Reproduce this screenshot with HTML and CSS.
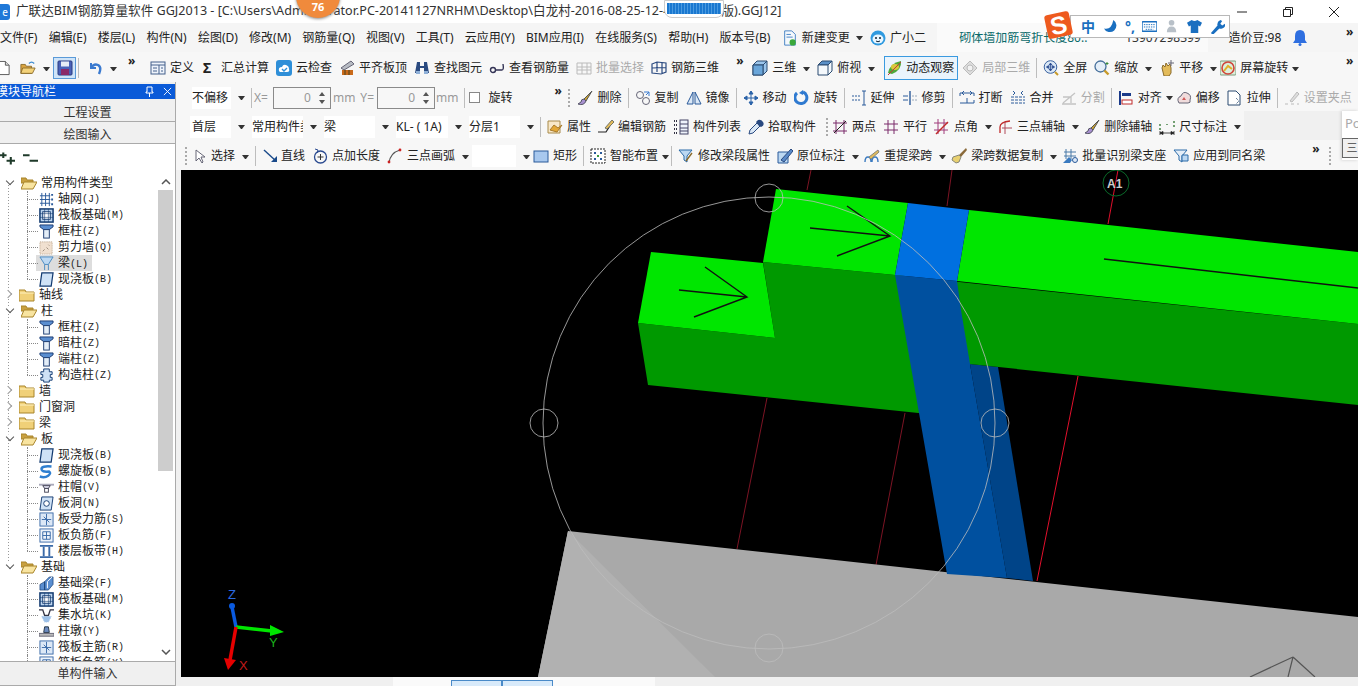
FILE: index.html
```html
<!DOCTYPE html>
<html lang="zh-CN">
<head>
<meta charset="utf-8">
<title>广联达BIM钢筋算量软件 GGJ2013</title>
<link rel="stylesheet" href="styles.css">
</head>
<body>
<svg class="sprite" xmlns="http://www.w3.org/2000/svg">
<defs>
<symbol id="new" viewBox="0 0 16 16"><path d="M2 1h8l4 4v10H2z" fill="#fff" stroke="#555"/><path d="M10 1v4h4" fill="#ddd" stroke="#555"/></symbol>
<symbol id="open" viewBox="0 0 18 16"><path d="M1 4h5l1 2h6v8H1z" fill="#d9a441" stroke="#8a6a2a"/><path d="M3 8h14l-3 6H1z" fill="#f3d27a" stroke="#8a6a2a"/><path d="M10 3q3-3 6 0" fill="none" stroke="#3a8ad0" stroke-width="1.4"/></symbol>
<symbol id="save" viewBox="0 0 16 16"><rect x="1" y="1" width="14" height="14" rx="1" fill="#4a62b8" stroke="#2a3a80"/><rect x="4" y="1.5" width="8" height="5" fill="#e8edf6"/><rect x="4" y="9" width="8" height="6" fill="#8a2a6a"/></symbol>
<symbol id="undo" viewBox="0 0 16 16"><path d="M4 3v5h5" fill="none" stroke="#3a7ad0" stroke-width="2"/><path d="M4 8q3-5 7-3t1 9" fill="none" stroke="#3a7ad0" stroke-width="2.4"/></symbol>
<symbol id="def" viewBox="0 0 16 16"><rect x="1" y="2" width="14" height="12" fill="#eef3fb" stroke="#44608c"/><path d="M1 5h14M9 5v9M3 8h4M3 11h4M11 8h2M11 11h2" stroke="#44608c" fill="none"/></symbol>
<symbol id="cloud" viewBox="0 0 16 16"><rect x="0" y="0" width="16" height="16" rx="3" fill="#2f8fd8"/><path d="M3 11q-1-4 3-4 1-3 4-2t3 4q1 3-2 3H4z" fill="#fff"/><path d="M6 9l2 2 3-3" fill="none" stroke="#2f8fd8" stroke-width="1.4"/></symbol>
<symbol id="aligntop" viewBox="0 0 16 16"><path d="M2 8L12 1l3 3L5 10z" fill="#b8bcc4" stroke="#667"/><rect x="3" y="10" width="11" height="5" fill="#c96a1a"/><path d="M6 10v5M10 10v5" stroke="#442" /></symbol>
<symbol id="binoc" viewBox="0 0 16 16"><path d="M3 2h3v4h4V2h3l2 11H10V8H6v5H1z" fill="#2a4a80"/><rect x="2" y="11" width="4" height="3" fill="#8fb0d8"/><rect x="10" y="11" width="4" height="3" fill="#8fb0d8"/></symbol>
<symbol id="lookrebar" viewBox="0 0 16 16"><circle cx="4" cy="10" r="2.5" fill="none" stroke="#335" stroke-width="1.4"/><path d="M7 10h6q2 0 1-6" fill="none" stroke="#335" stroke-width="1.4"/></symbol>
<symbol id="batch" viewBox="0 0 16 16"><path d="M1 3h14v11H1zM1 7h14M1 10h14M6 3v11M11 3v11" fill="none" stroke="#bbb"/></symbol>
<symbol id="rebar3d" viewBox="0 0 16 16"><path d="M1 4l5-2 9 1v9l-5 2-9-1zM6 2v10M11 3v11M1 8l14-.5" fill="none" stroke="#2a4a80" stroke-width="1.2"/></symbol>
<symbol id="cube" viewBox="0 0 16 16"><path d="M5 1h10v10l-4 4H1V5z" fill="#9cc6ec" stroke="#2a4a70"/><path d="M1 5h10v10M11 5l4-4" fill="none" stroke="#2a4a70"/><path d="M1 5h10v10H1z" fill="#6aa6da" stroke="#2a4a70"/></symbol>
<symbol id="cubetop" viewBox="0 0 16 16"><path d="M1 5l4-4h10l-4 4z" fill="#5a90c8" stroke="#2a4a70"/><path d="M1 5h10v10H1zM11 5l4-4v10l-4 4" fill="#f4f8fc" stroke="#2a4a70"/></symbol>
<symbol id="orbit" viewBox="0 0 16 16"><path d="M1 13Q3 3 14 1q1 9-9 13z" fill="#4fa83a"/><ellipse cx="8" cy="7" rx="4" ry="3" fill="#d8c83a"/><path d="M1 15L14 2" stroke="#c23a3a"/></symbol>
<symbol id="local3d" viewBox="0 0 16 16"><path d="M8 1l7 7-7 7-7-7z" fill="#ddd" stroke="#bbb"/><circle cx="8" cy="8" r="3" fill="#f2f2f2" stroke="#bbb"/></symbol>
<symbol id="full" viewBox="0 0 16 16"><circle cx="7.5" cy="7" r="6.3" fill="#dbe8f6" stroke="#3a62a0"/><path d="M7.5 3v8M3.5 7h8M7.5 3l-1.5 2h3zM7.5 11l-1.5-2h3zM3.5 7l2-1.5v3zM11.5 7l-2-1.5v3z" fill="#2a4a90" stroke="#2a4a90" stroke-width=".7"/><path d="M12 12l3 3" stroke="#c89a2a" stroke-width="2"/></symbol>
<symbol id="zoom" viewBox="0 0 16 16"><circle cx="6.5" cy="6.5" r="5.5" fill="#e4eef8" stroke="#47709c" stroke-width="1.3"/><path d="M10.5 10.5l4 4" stroke="#c89a2a" stroke-width="2.4"/><path d="M13 2v3M11.5 3.5h3" stroke="#3a8a3a"/></symbol>
<symbol id="pan" viewBox="0 0 16 16"><path d="M3 8l1-3 2 2 1-4 2 3 2-2 1 4v5l-2 3H5z" fill="#e3bb5a" stroke="#8a6a2a"/><path d="M12 0v6M9 3h6" stroke="#667"/></symbol>
<symbol id="screenrot" viewBox="0 0 16 16"><rect x="0" y="1" width="16" height="14" rx="1" fill="#dcefdc" stroke="#7a9a7a"/><circle cx="8" cy="8" r="6" fill="none" stroke="#d0433a" stroke-width="1.6"/><path d="M4 11l4-5 4 3" fill="none" stroke="#e0b02a" stroke-width="2"/></symbol>
<symbol id="brush" viewBox="0 0 16 16"><path d="M15 1L7 9l2 2z" fill="#c8a030" stroke="#555"/><path d="M7 9q-3 0-3 3l-3 2q6 2 8-3z" fill="#a890d0" stroke="#556"/></symbol>
<symbol id="copy" viewBox="0 0 16 16"><circle cx="5" cy="5" r="3.5" fill="none" stroke="#667"/><circle cx="11" cy="11" r="3.5" fill="none" stroke="#667"/><path d="M9 2h5v4M14 2l-3 3" fill="none" stroke="#3a7ad0"/></symbol>
<symbol id="mirror" viewBox="0 0 16 16"><path d="M7 2v12H1zM9 2v12h6z" fill="#dbe8f6" stroke="#2a5a9a"/></symbol>
<symbol id="move" viewBox="0 0 16 16"><path d="M8 1v14M1 8h14M8 1L6 4h4zM8 15l-2-3h4zM1 8l3-2v4zM15 8l-3-2v4z" fill="#2a62a8" stroke="#2a62a8"/></symbol>
<symbol id="rot" viewBox="0 0 16 16"><path d="M3 3a6 6 0 1 0 6-1" fill="none" stroke="#2f7ad0" stroke-width="3"/><path d="M9 0v5l-4-2z" fill="#2f7ad0"/></symbol>
<symbol id="extend" viewBox="0 0 16 16"><path d="M1 6h8M1 10h8" stroke="#2a5a9a" stroke-dasharray="2 1"/><path d="M13 1v14M11 1h4M11 15h4" stroke="#2a5a9a" fill="none"/></symbol>
<symbol id="trim" viewBox="0 0 16 16"><path d="M8 1v14" stroke="#2a5a9a" stroke-width="1.4"/><path d="M1 6h5M1 10h5" stroke="#2a5a9a"/><path d="M10 6h5M10 10h5" stroke="#9ab" stroke-dasharray="2 1"/></symbol>
<symbol id="break" viewBox="0 0 16 16"><path d="M1 6V3h14v3M1 13h14v-3" fill="none" stroke="#2a5a9a"/><path d="M5 1l-2 2 2 2M11 1l2 2-2 2M8 8v5" fill="none" stroke="#2a5a9a"/></symbol>
<symbol id="merge" viewBox="0 0 16 16"><path d="M1 7h14M1 13h14M1 10h14" stroke="#2a5a9a" stroke-dasharray="3 1"/><path d="M3 1l2 2-2 2M13 1l-2 2 2 2" fill="none" stroke="#2a5a9a"/></symbol>
<symbol id="split" viewBox="0 0 16 16"><path d="M1 14h14M2 13L14 3M2 7h8v6" fill="none" stroke="#c4c4c4" stroke-width="1.3"/></symbol>
<symbol id="align" viewBox="0 0 16 16"><path d="M2 1v14" stroke="#1a3a8a" stroke-width="2"/><rect x="4" y="3" width="9" height="3" fill="#1a3a8a"/><rect x="4" y="10" width="10" height="4" fill="#fff" stroke="#c02a2a"/></symbol>
<symbol id="offset" viewBox="0 0 16 16"><path d="M3 13q-3-5 2-7 2-5 6-3 5 2 3 7 1 3-2 3z" fill="#f0dcdc" stroke="#667"/><path d="M6 10l2-3 2 3z" fill="#d05a5a"/></symbol>
<symbol id="stretch" viewBox="0 0 16 16"><path d="M1 1h8l4 4v10H1z" fill="#fff" stroke="#2a4a70"/><path d="M9 8l3 3-3 3" fill="none" stroke="#2a4a70" stroke-dasharray="1 1"/></symbol>
<symbol id="grip" viewBox="0 0 16 16"><path d="M1 14h3M7 14h3M13 14h2" stroke="#bbb"/><path d="M6 11l7-9 2 2-7 8z" fill="#ddd" stroke="#bbb"/></symbol>
<symbol id="attr" viewBox="0 0 16 16"><path d="M1 2h12v12H1z" fill="#f8e8c8" stroke="#a88a4a"/><path d="M3 11l4-5 4 3 4-3-5 7z" fill="#e3a838" stroke="#a87a2a"/></symbol>
<symbol id="edit" viewBox="0 0 16 16"><path d="M0 13h8l7-11" fill="none" stroke="#222" stroke-width="1.2"/><path d="M7 9l7-8 2 2-7 7z" fill="#e3bb5a" stroke="#776"/></symbol>
<symbol id="list" viewBox="0 0 16 16"><path d="M1 2h3M1 6h3M1 10h3M1 14h3" stroke="#334" stroke-width="2" stroke-dasharray="1 1"/><rect x="7" y="1" width="8" height="14" fill="#eef3fb" stroke="#446"/><path d="M7 5h8M7 9h8M7 12h8" stroke="#446"/></symbol>
<symbol id="pick" viewBox="0 0 16 16"><path d="M1 15l1-4 7-7 3 3-7 7z" fill="#dbe8f6" stroke="#2a4a80"/><path d="M8 3l2-2q3-1 5 2t-2 5l-2-1z" fill="#2a4a80"/></symbol>
<symbol id="twopt" viewBox="0 0 16 16"><path d="M1 4h14M1 12h14M4 1v14M12 1v14" stroke="#7a2a6a" fill="none"/><path d="M2 14L14 2" stroke="#222"/></symbol>
<symbol id="parallel" viewBox="0 0 16 16"><path d="M1 5h14M1 11h14M5 1v14M11 1v14" stroke="#7a2a6a" fill="none"/></symbol>
<symbol id="angle" viewBox="0 0 16 16"><path d="M0 4h14M0 11h14M4 0v15M10 0v15" stroke="#a03a7a" fill="none"/><path d="M2 15L14 3" stroke="#c02a2a" stroke-width="1.4"/></symbol>
<symbol id="threept" viewBox="0 0 16 16"><path d="M3 14V8q0-5 10-6" fill="none" stroke="#c02a2a" stroke-width="1.3"/><path d="M8 3v12M5 9h10" stroke="#b04a5a"/></symbol>
<symbol id="dim" viewBox="0 0 16 16"><path d="M1 14h14M1 12v4M15 12v4M1 14l3-1.500v3zM15 14l-3-1.500v3z" fill="#222" stroke="#222" stroke-width=".8"/><path d="M1 5v2M1 9v2M8 5v1M15 2v2M15 6v2" stroke="#3a7a3a" stroke-width="1.400"/></symbol>
<symbol id="line" viewBox="0 0 16 16"><path d="M1 2l12 11" stroke="#1a4a8a" stroke-width="1.4"/><path d="M14 14V8l-6 6z" fill="#1a4a8a"/></symbol>
<symbol id="ptlen" viewBox="0 0 16 16"><circle cx="8.500" cy="9" r="6" fill="none" stroke="#2a4a90" stroke-width="1.3"/><path d="M8.500 6v6M5.500 9h6" stroke="#333"/><path d="M3 1l3 1-1 3" fill="none" stroke="#2a4a90"/></symbol>
<symbol id="arc" viewBox="0 0 16 16"><path d="M2 15Q3 5 13 2" fill="none" stroke="#555" stroke-width="1.3"/><circle cx="2" cy="14" r="1.400" fill="#c22"/><circle cx="13" cy="2" r="1.400" fill="#c22"/></symbol>
<symbol id="rect" viewBox="0 0 16 16"><rect x="1" y="3" width="14" height="11" fill="#a8c8ee" stroke="#2a5a9a"/></symbol>
<symbol id="smart" viewBox="0 0 16 16"><rect x="1" y="1" width="14" height="14" fill="#fff" stroke="#222" stroke-dasharray="2 1"/><path d="M4 4h2v2H4zM10 4h2v2h-2zM4 10h2v2H4zM10 10h2v2h-2z" fill="#2a5a9a"/><path d="M7 7h2v2H7z" fill="#3a9a3a"/></symbol>
<symbol id="modseg" viewBox="0 0 16 16"><path d="M1 2h13L9 8v6L6 12V8z" fill="#bcd8f2" stroke="#2a6aa8"/><path d="M8 13l6-8" stroke="#8a6a2a" stroke-width="1.400"/></symbol>
<symbol id="inplace" viewBox="0 0 16 16"><path d="M1 4h10v11H1z" fill="#bcd8f2" stroke="#2a5a9a"/><path d="M4 12L14 1l2 2-9 11z" fill="#5a8ac8" stroke="#2a4a80"/></symbol>
<symbol id="relift" viewBox="0 0 16 16"><path d="M1 14q0-5 3-5t3 5M8 14q0-5 3-5t3 5" fill="none" stroke="#3a7ac0" stroke-width="1.400"/><path d="M5 9l9-7 1 2-8 7z" fill="#e3bb5a" stroke="#887"/></symbol>
<symbol id="copydata" viewBox="0 0 16 16"><path d="M15 0L8 7l2 2 6-7z" fill="#8a6a3a"/><path d="M8 7L2 9l-1 3 4 3 3-1 2-5z" fill="#e8d070" stroke="#887"/></symbol>
<symbol id="batchid" viewBox="0 0 16 16"><path d="M2 4h12M2 8h12M4 1v10M9 1v10" stroke="#4a7aa8" fill="none"/><path d="M1 15l6-6 3 3-2 3z" fill="#3a7ac0"/><circle cx="13" cy="12" r="2.500" fill="#dbe8f6" stroke="#2a5a9a"/></symbol>
<symbol id="apply" viewBox="0 0 16 16"><path d="M1 2h13L9 8v6L6 12V8z" fill="#e4eef8" stroke="#2a6aa8"/><path d="M9 7h6v6H9z" fill="#bcd8f2" stroke="#2a6aa8"/></symbol>
<symbol id="cursor" viewBox="0 0 10 14"><path d="M1 1v11l3-3 3 5 1-1-2-5h4z" fill="#fff" stroke="#667"/></symbol>
<symbol id="docnew" viewBox="0 0 16 18"><path d="M2 1h8l4 4v12H2z" fill="#f4f8fc" stroke="#3a7ac0"/><path d="M4 5h5M4 8h7" stroke="#3a7ac0"/><circle cx="11" cy="14" r="3.500" fill="#3aa83a"/></symbol>
<symbol id="xiao" viewBox="0 0 16 16"><circle cx="8" cy="8" r="7.500" fill="#2f9ae0"/><ellipse cx="8" cy="9" rx="5.500" ry="4.500" fill="#e8f6ff"/><circle cx="6" cy="8" r="1" fill="#123"/><circle cx="10" cy="8" r="1" fill="#123"/><path d="M6 11q2 1.500 4 0" stroke="#123" fill="none"/></symbol>
<symbol id="bell" viewBox="0 0 14 16"><path d="M7 0q5 0 5 6v4l2 3H0l2-3V6q0-6 5-6z" fill="#2f6fe0"/><circle cx="7" cy="14.500" r="1.500" fill="#2f6fe0"/></symbol>
<symbol id="fold" viewBox="0 0 16 14"><path d="M0 2h6l1 2h8v9H0z" fill="#f0d078" stroke="#a8842a"/><path d="M1 5h14" stroke="#fff2c0"/></symbol>
<symbol id="foldo" viewBox="0 0 16 14"><path d="M0 2h5l1 2h6v3H0z" fill="#c8a040" stroke="#a8842a"/><path d="M3 6h13l-4 7H0z" fill="#f8e4a0" stroke="#a8842a"/></symbol>
<symbol id="t-grid" viewBox="0 0 16 16"><path d="M3 1v14M7 1v14M11 1v14M1 4h11M1 8h11M1 12h11" stroke="#2a5a9a" fill="none"/><path d="M14 2v2M14 7v2M14 12v2" stroke="#2a5a9a" stroke-width="2"/></symbol>
<symbol id="t-raft" viewBox="0 0 16 16"><rect x="1" y="1" width="14" height="14" fill="#bcd4ee" stroke="#123a70" stroke-width="1.600"/><rect x="4" y="4" width="8" height="8" fill="#fff" stroke="#123a70"/><path d="M1 6h14M1 10h14M6 1v14M10 1v14" stroke="#123a70" stroke-width=".6"/></symbol>
<symbol id="t-col" viewBox="0 0 16 16"><path d="M1 1h14v2l-4 3H5L1 3z" fill="#5a8ed0" stroke="#1a3a70"/><rect x="5" y="6" width="6" height="9" fill="#e4eef8" stroke="#1a3a70"/></symbol>
<symbol id="t-wall" viewBox="0 0 16 16"><rect x="1" y="2" width="13" height="13" fill="#f0e0d0" stroke="#b8a088" stroke-dasharray="1 1"/><path d="M4 12l2-2M8 8l2 2M10 5l1 1" stroke="#9a8a7a"/></symbol>
<symbol id="t-beam" viewBox="0 0 16 16"><path d="M1 1h14L10 9H6z" fill="#bcd8f2" stroke="#4a8ac0"/><path d="M6 9v6M10 9v6" stroke="#4a8ac0"/></symbol>
<symbol id="t-slab" viewBox="0 0 16 16"><path d="M3 1h12l-2 14H1z" fill="#cfe2f6" stroke="#123a70" stroke-width="1.300"/></symbol>
<symbol id="t-cons" viewBox="0 0 16 16"><path d="M5 1h6v3h3v3h-2v3h2v3h-3v2H5v-2H2v-3h2V7H2V4h3z" fill="#cfe2f6" stroke="#123a70"/></symbol>
<symbol id="t-spiral" viewBox="0 0 18 16"><path d="M15 2Q3 1 3 5t9 3q3 2-1 5t-10 1" fill="none" stroke="#2f7fd0" stroke-width="3"/></symbol>
<symbol id="t-cap" viewBox="0 0 16 16"><rect x="0" y="4" width="16" height="2" fill="#aab"/><path d="M4 6h8l-2 3H6z" fill="#dde" stroke="#445"/><rect x="6" y="9" width="4" height="4" fill="#fff" stroke="#445"/></symbol>
<symbol id="t-hole" viewBox="0 0 16 16"><path d="M3 1h12l-2 14H1z" fill="#cfe2f6" stroke="#123a70"/><circle cx="8" cy="8" r="3" fill="#fff" stroke="#123a70"/></symbol>
<symbol id="t-rb" viewBox="0 0 16 16"><rect x="1" y="1" width="14" height="14" fill="#dce8f6" stroke="#3a6aa8"/><path d="M8 2v12M3 8h10" stroke="#3a6aa8"/><path d="M5 5l6 6" stroke="#3a6aa8"/></symbol>
<symbol id="t-neg" viewBox="0 0 16 16"><rect x="1" y="1" width="14" height="14" fill="#eef4fb" stroke="#3a6aa8"/><path d="M4 4h8v8H4zM8 4v8M4 8h8" fill="none" stroke="#3a6aa8"/></symbol>
<symbol id="t-band" viewBox="0 0 16 16"><path d="M1 2h14M1 14h14" stroke="#3a6aa8" stroke-width="2"/><path d="M5 3v10M11 3v10" stroke="#3a6aa8" stroke-width="2"/></symbol>
<symbol id="t-fb" viewBox="0 0 16 16"><path d="M1 15V9l5-3v9zM6 6l5-5h4v8l-5 6H6z" fill="#5a8ed0" stroke="#123a70" stroke-width=".7"/><path d="M9 13V6l5-5" stroke="#fff" fill="none"/></symbol>
<symbol id="t-pit" viewBox="0 0 16 16"><path d="M0 2h4l2 6h4l2-6h4" fill="none" stroke="#334" stroke-width="1.400"/><path d="M3 9h10l-3 6H6z" fill="#9cc0e8" stroke="#9cc0e8" stroke-dasharray="1 1"/></symbol>
<symbol id="t-pier" viewBox="0 0 16 16"><path d="M6 3h4l1 6H5z" fill="#6a8ac0" stroke="#234"/><rect x="0" y="10" width="16" height="3" fill="#bbb" stroke="#667"/></symbol>
</defs>
</svg>

<div class="app">
  <header class="titlebar">
    <span class="appicon">e</span>
    <span class="title-text">广联达BIM钢筋算量软件 GGJ2013 - [C:\Users\Administrator.PC-20141127NRHM\Desktop\白龙村-2016-08-25-12-47-33(386版).GGJ12]</span>
    <span class="winbtn">
      <svg class="wb" viewBox="0 0 12 12"><path d="M1 6h10" stroke="#222"/></svg>
      <svg class="wb" viewBox="0 0 12 12"><path d="M1.500 3.500h7v7h-7zM3.500 3V1.500h7v7H9" fill="none" stroke="#222"/></svg>
      <svg class="wb" viewBox="0 0 12 12"><path d="M1 1l10 10M11 1L1 11" stroke="#222"/></svg>
    </span>
  </header>

  <nav class="menubar">
    <span>文件(F)</span><span>编辑(E)</span><span>楼层(L)</span><span>构件(N)</span><span>绘图(D)</span><span>修改(M)</span><span>钢筋量(Q)</span><span>视图(V)</span><span>工具(T)</span><span>云应用(Y)</span><span>BIM应用(I)</span><span>在线服务(S)</span><span>帮助(H)</span><span>版本号(B)</span>
    <span class="tool menu-tool"><svg class="ic"><use href="#docnew"/></svg>新建变更</span><i class="caret menu-caret"></i>
    <span class="tool"><svg class="ic"><use href="#xiao"/></svg>广小二</span>
    <span class="ticker"><span class="ticker-text">砌体墙加筋弯折长度80..</span><span class="phone">13907298399</span></span>
    <span class="beans">造价豆:98</span>
    <svg class="bell"><use href="#bell"/></svg>
    <span class="chev end">»</span>
  </nav>

  <div class="toolbar main">
    <svg class="ic newdoc"><use href="#new"/></svg>
    <svg class="ic open"><use href="#open"/></svg><i class="caret"></i>
    <span class="savebox"><svg class="ic"><use href="#save"/></svg></span>
    <i class="sep"></i>
    <svg class="ic undo"><use href="#undo"/></svg><i class="caret"></i>
    <span class="chev c-main">»</span>
    <span class="tool"><svg class="ic"><use href="#def"/></svg>定义</span>
    <span class="tool sigma"><b>Σ</b>汇总计算</span>
    <span class="tool"><svg class="ic"><use href="#cloud"/></svg>云检查</span>
    <span class="tool"><svg class="ic"><use href="#aligntop"/></svg>平齐板顶</span>
    <span class="tool"><svg class="ic"><use href="#binoc"/></svg>查找图元</span>
    <span class="tool"><svg class="ic"><use href="#lookrebar"/></svg>查看钢筋量</span>
    <span class="tool off"><svg class="ic"><use href="#batch"/></svg>批量选择</span>
    <span class="tool"><svg class="ic"><use href="#rebar3d"/></svg>钢筋三维</span>
    <span class="chev c-view">»</span>
    <span class="tool"><svg class="ic"><use href="#cube"/></svg>三维</span><i class="caret"></i>
    <span class="tool"><svg class="ic"><use href="#cubetop"/></svg>俯视</span><i class="caret"></i>
    <span class="tool active"><svg class="ic"><use href="#orbit"/></svg>动态观察</span>
    <span class="tool off"><svg class="ic"><use href="#local3d"/></svg>局部三维</span>
    <i class="sep"></i>
    <span class="tool"><svg class="ic"><use href="#full"/></svg>全屏</span>
    <span class="tool"><svg class="ic"><use href="#zoom"/></svg>缩放</span><i class="caret"></i>
    <span class="tool"><svg class="ic"><use href="#pan"/></svg>平移</span><i class="caret snug4"></i>
    <span class="tool"><svg class="ic"><use href="#screenrot"/></svg>屏幕旋转</span><i class="caret tight"></i>
    <span class="chev end">»</span>
  </div>

  <div class="workspace">
    <aside class="nav">
      <div class="nav-head"><span class="nav-title">模块导航栏</span>
        <svg class="nav-pin" viewBox="0 0 10 12"><path d="M3 1h5v5h1v1H2V6h1zM5.500 7v4" fill="none" stroke="#fff"/></svg>
        <svg class="nav-x" viewBox="0 0 10 10"><path d="M1 1l8 8M9 1l-8 8" stroke="#fff"/></svg>
      </div>
      <div class="nav-btn">工程设置</div>
      <div class="nav-btn">绘图输入</div>
      <div class="nav-tools">
        <svg class="expand" viewBox="0 0 16 14"><path d="M0 4h7M3.500 1v6M7 10h9M11.500 6v8" stroke="#1f3a2a" stroke-width="2.200"/></svg>
        <svg class="expand" viewBox="0 0 16 14"><path d="M0 4h7M7 10h9" stroke="#1f3a2a" stroke-width="2.200"/></svg>
      </div>
      <div class="tree-wrap">
        <ul class="tree">
          <li class="folder open"><svg class="fi"><use href="#foldo"/></svg>常用构件类型</li>
          <li class="leaf"><svg class="li"><use href="#t-grid"/></svg>轴网<em>(J)</em></li>
          <li class="leaf"><svg class="li"><use href="#t-raft"/></svg>筏板基础<em>(M)</em></li>
          <li class="leaf"><svg class="li"><use href="#t-col"/></svg>框柱<em>(Z)</em></li>
          <li class="leaf"><svg class="li"><use href="#t-wall"/></svg>剪力墙<em>(Q)</em></li>
          <li class="leaf sel"><svg class="li"><use href="#t-beam"/></svg><span>梁<em>(L)</em></span></li>
          <li class="leaf last"><svg class="li"><use href="#t-slab"/></svg>现浇板<em>(B)</em></li>
          <li class="folder"><svg class="fi"><use href="#fold"/></svg>轴线</li>
          <li class="folder open"><svg class="fi"><use href="#foldo"/></svg>柱</li>
          <li class="leaf"><svg class="li"><use href="#t-col"/></svg>框柱<em>(Z)</em></li>
          <li class="leaf"><svg class="li"><use href="#t-col"/></svg>暗柱<em>(Z)</em></li>
          <li class="leaf"><svg class="li"><use href="#t-col"/></svg>端柱<em>(Z)</em></li>
          <li class="leaf last"><svg class="li"><use href="#t-cons"/></svg>构造柱<em>(Z)</em></li>
          <li class="folder"><svg class="fi"><use href="#fold"/></svg>墙</li>
          <li class="folder"><svg class="fi"><use href="#fold"/></svg>门窗洞</li>
          <li class="folder"><svg class="fi"><use href="#fold"/></svg>梁</li>
          <li class="folder open"><svg class="fi"><use href="#foldo"/></svg>板</li>
          <li class="leaf"><svg class="li"><use href="#t-slab"/></svg>现浇板<em>(B)</em></li>
          <li class="leaf"><svg class="li"><use href="#t-spiral"/></svg>螺旋板<em>(B)</em></li>
          <li class="leaf"><svg class="li"><use href="#t-cap"/></svg>柱帽<em>(V)</em></li>
          <li class="leaf"><svg class="li"><use href="#t-hole"/></svg>板洞<em>(N)</em></li>
          <li class="leaf"><svg class="li"><use href="#t-rb"/></svg>板受力筋<em>(S)</em></li>
          <li class="leaf"><svg class="li"><use href="#t-neg"/></svg>板负筋<em>(F)</em></li>
          <li class="leaf last"><svg class="li"><use href="#t-band"/></svg>楼层板带<em>(H)</em></li>
          <li class="folder open"><svg class="fi"><use href="#foldo"/></svg>基础</li>
          <li class="leaf"><svg class="li"><use href="#t-fb"/></svg>基础梁<em>(F)</em></li>
          <li class="leaf"><svg class="li"><use href="#t-raft"/></svg>筏板基础<em>(M)</em></li>
          <li class="leaf"><svg class="li"><use href="#t-pit"/></svg>集水坑<em>(K)</em></li>
          <li class="leaf"><svg class="li"><use href="#t-pier"/></svg>柱墩<em>(Y)</em></li>
          <li class="leaf"><svg class="li"><use href="#t-rb"/></svg>筏板主筋<em>(R)</em></li>
          <li class="leaf"><svg class="li"><use href="#t-neg"/></svg>筏板负筋<em>(X)</em></li>
        </ul>
        <div class="scrollbar">
          <svg class="arrow" viewBox="0 0 10 6"><path d="M1 5l4-4 4 4" fill="none" stroke="#555" stroke-width="1.500"/></svg>
          <div class="thumb"></div>
          <svg class="arrow down" viewBox="0 0 10 6"><path d="M1 1l4 4 4-4" fill="none" stroke="#555" stroke-width="1.500"/></svg>
        </div>
      </div>
      <div class="nav-btn bottom">单构件输入</div>
    </aside>

    <div class="content">
      <div class="toolbar row2">
        <span class="combo c39">不偏移</span><i class="caret"></i>
        <i class="sep"></i>
        <span class="coord cx">X=</span><span class="spin"><span>0</span></span><span class="coord cmm">mm</span>
        <span class="coord cy">Y=</span><span class="spin"><span>0</span></span><span class="coord cmm2">mm</span>
        <i class="sep"></i>
        <i class="check"></i><span class="rotlabel">旋转</span>
        <span class="chev c-row2">»</span><i class="gripbar"></i>
        <span class="tool"><svg class="ic"><use href="#brush"/></svg>删除</span><i class="sep"></i>
        <span class="tool"><svg class="ic"><use href="#copy"/></svg>复制</span>
        <span class="tool"><svg class="ic"><use href="#mirror"/></svg>镜像</span><i class="sep"></i>
        <span class="tool"><svg class="ic"><use href="#move"/></svg>移动</span>
        <span class="tool"><svg class="ic"><use href="#rot"/></svg>旋转</span><i class="sep"></i>
        <span class="tool"><svg class="ic"><use href="#extend"/></svg>延伸</span>
        <span class="tool"><svg class="ic"><use href="#trim"/></svg>修剪</span><i class="sep"></i>
        <span class="tool"><svg class="ic"><use href="#break"/></svg>打断</span>
        <span class="tool"><svg class="ic"><use href="#merge"/></svg>合并</span>
        <span class="tool off"><svg class="ic"><use href="#split"/></svg>分割</span><i class="sep"></i>
        <span class="tool"><svg class="ic"><use href="#align"/></svg>对齐</span><i class="caret tight snug4"></i>
        <span class="tool"><svg class="ic"><use href="#offset"/></svg>偏移</span>
        <span class="tool"><svg class="ic"><use href="#stretch"/></svg>拉伸</span><i class="sep"></i>
        <span class="tool off"><svg class="ic"><use href="#grip"/></svg>设置夹点</span>
      </div>
      <div class="toolbar row3">
        <span class="combo c41">首层</span><i class="caret"></i>
        <span class="combo c51">常用构件类型</span><i class="caret"></i>
        <span class="combo c51">梁</span><i class="caret"></i>
        <span class="combo c52">KL- ( 1A)</span><i class="caret"></i>
        <span class="combo c51">分层1</span><i class="caret"></i>
        <i class="sep"></i>
        <span class="tool"><svg class="ic"><use href="#attr"/></svg>属性</span>
        <span class="tool"><svg class="ic"><use href="#edit"/></svg>编辑钢筋</span>
        <span class="tool"><svg class="ic"><use href="#list"/></svg>构件列表</span>
        <span class="tool"><svg class="ic"><use href="#pick"/></svg>拾取构件</span>
        <i class="gripbar g-row3"></i>
        <span class="tool"><svg class="ic"><use href="#twopt"/></svg>两点</span>
        <span class="tool"><svg class="ic"><use href="#parallel"/></svg>平行</span>
        <span class="tool"><svg class="ic"><use href="#angle"/></svg>点角</span><i class="caret snug"></i>
        <span class="tool"><svg class="ic"><use href="#threept"/></svg>三点辅轴</span><i class="caret snug"></i>
        <span class="tool"><svg class="ic"><use href="#brush"/></svg>删除辅轴</span>
        <span class="tool"><svg class="ic"><use href="#dim"/></svg>尺寸标注</span><i class="caret"></i>
      </div>
      <div class="toolbar row4">
        <i class="gripbar"></i>
        <span class="tool pointer"><svg class="cur"><use href="#cursor"/></svg>选择</span><i class="caret"></i><i class="sep"></i>
        <span class="tool narrow"><svg class="ic"><use href="#line"/></svg>直线</span>
        <span class="tool"><svg class="ic"><use href="#ptlen"/></svg>点加长度</span>
        <span class="tool"><svg class="ic"><use href="#arc"/></svg>三点画弧</span><i class="caret"></i>
        <span class="combo c45"></span><i class="caret snug4"></i>
        <span class="tool"><svg class="ic"><use href="#rect"/></svg>矩形</span><i class="sep"></i>
        <span class="tool"><svg class="ic"><use href="#smart"/></svg>智能布置</span><i class="caret tight snug4"></i><i class="sep"></i>
        <span class="tool"><svg class="ic"><use href="#modseg"/></svg>修改梁段属性</span>
        <span class="tool"><svg class="ic"><use href="#inplace"/></svg>原位标注</span><i class="caret snug"></i>
        <span class="tool"><svg class="ic"><use href="#relift"/></svg>重提梁跨</span><i class="caret snug"></i>
        <span class="tool"><svg class="ic"><use href="#copydata"/></svg>梁跨数据复制</span><i class="caret snug"></i>
        <span class="tool"><svg class="ic"><use href="#batchid"/></svg>批量识别梁支座</span>
        <span class="tool"><svg class="ic"><use href="#apply"/></svg>应用到同名梁</span>
        <span class="chev c-row4">»</span><i class="gripbar"></i>
      </div>

      <svg class="scene" viewBox="181 170 1177 507" preserveAspectRatio="none">
        <rect x="181" y="170" width="1177" height="507" fill="#000"/>
        <g stroke="#7c1424" fill="none">
          <path d="M811 170L807 190M952 170L947 206M767 398L737 549M905 413L876 565"/>
          <path d="M1118 170L1108 224M1078 376L1037 581" stroke="#e0102c"/>
        </g>
        <polygon points="568,531 1358,617 1358,677 538,677" fill="#a9a9a9"/>
        <polygon points="568,531 538,677 715,677" fill="#b1b1b1"/>
        <path d="M1293 657L1250 677M1293 657L1288 677M1293 657L1315 677" stroke="#555" stroke-width="1.200" fill="none"/>
        <polygon points="970,364 998,367 1033,581 1007,578" fill="#004488"/>
        <polygon points="638,323 775,338 763,262 905,276 928,414 648,385" fill="#009900"/>
        <polygon points="950,281 1358,324 1358,405 960,363" fill="#009900"/>
        <polygon points="895,275 957,281 961,310 970,364 1007,578 947,574" fill="#00509f"/>
        <polygon points="776,189 908,203 895,275 763,262" fill="#00e600"/>
        <polygon points="651,252 763,263 775,338 638,323" fill="#00e600"/>
        <polygon points="969,210 1358,252 1358,324 957,281" fill="#00e600"/>
        <polygon points="908,203 969,210 957,281 895,275" fill="#0070e0"/>
        <g stroke="#111" stroke-width="1.400" fill="none">
          <path d="M810 228L890 236M847 206L890 236L837 256"/>
          <path d="M679 290L747 297M705 267L747 297L694 317"/>
          <path d="M1104 259L1358 288"/>
        </g>
        <g fill="none" stroke="#bdbdbd" stroke-width=".8">
          <circle cx="769" cy="423" r="226"/>
          <circle cx="769" cy="198" r="14"/>
          <circle cx="544" cy="423" r="14"/>
          <circle cx="995" cy="423" r="14"/>
          <circle cx="769" cy="648" r="14"/>
        </g>
        <circle cx="1116" cy="183" r="13" fill="none" stroke="#0a6a2a"/>
        <text x="1107" y="188" class="axis-tag">A1</text>
        <path d="M236 627L232 607" stroke="#0a5ae0" stroke-width="3.500"/><circle cx="232" cy="606" r="3" fill="#0a5ae0"/>
        <path d="M236 627L272 631" stroke="#00e600" stroke-width="3.500"/><path d="M270 625L284 632L270 636z" fill="#00e600"/>
        <path d="M236 627L230 660" stroke="#e60000" stroke-width="3.500"/><path d="M224 658L236 660L228 670z" fill="#e60000"/>
        <text x="228" y="599" class="axis z">Z</text>
        <text x="269" y="647" class="axis y">Y</text>
        <text x="239" y="670" class="axis x">X</text>
      </svg>
      <div class="statusstrip">
        <span class="strip-white"><span class="strip-tab"></span><span class="strip-tab"></span></span>
      </div>
    </div>
  </div>

  <div class="badge"><span>76</span></div>
  <div class="progress"><span class="progress-bar"></span></div>
  <div class="sogou">
    <span class="sogou-s">S</span>
    <span class="sogou-bar">
      <b>中</b>
      <svg class="sg" viewBox="0 0 16 16"><path d="M11 1a7 7 0 1 1-10 9q8 2 10-9z" fill="#1a6fc0"/></svg>
      <span class="sg-punct">°,</span>
      <svg class="sg" viewBox="0 0 16 16"><rect x="0" y="3" width="16" height="10" rx="1" fill="none" stroke="#1a6fc0" stroke-width="1.500"/><path d="M2 6h12M2 8.500h12M4 11h8" stroke="#1a6fc0" stroke-dasharray="1.500 1"/></svg>
      <svg class="sg" viewBox="0 0 16 16"><circle cx="7" cy="4" r="3" fill="#b8c0c8"/><path d="M2 14q0-6 5-6t5 6z" fill="#b8c0c8"/></svg>
      <svg class="sg" viewBox="0 0 16 16"><path d="M5 1L0 4l2 4 2-1v8h8V7l2 1 2-4-5-3q-3 2-6 0z" fill="#1a6fc0"/></svg>
      <svg class="sg" viewBox="0 0 16 16"><path d="M1 15l7-8q-1-4 3-6l2 1-2 3 2 2 3-2q1 4-3 5-2 1-3 0l-7 7z" fill="#1a6fc0"/></svg>
    </span>
  </div>
  <div class="popcard"><span class="pop-text">Po</span><span class="pop-btn">三</span></div>
</div>
</body>
</html>
```

FILE: styles.css
```css
* { box-sizing: border-box; }
html, body { margin: 0; height: 100%; }
body { overflow: hidden; background: #f0f0f0; color: #222; font: 12px/1 "Noto Sans", "Noto Sans CJK SC", sans-serif; }
.sprite { position: absolute; width: 0; height: 0; }
ul { list-style: none; margin: 0; padding: 0; }
.app { position: relative; width: 1358px; height: 686px; display: flex; flex-direction: column; overflow: hidden; }

/* title bar */
.titlebar { height: 23px; flex: none; background: #fff; display: flex; align-items: center; white-space: nowrap; }
.appicon { width: 10px; height: 16px; margin-right: 6px; background: #1f78d8; border-radius: 0 3px 3px 0; color: #fff; font-size: 10px; line-height: 16px; text-align: center; flex: none; }
.title-text { font-size: 12.6px; color: #333; }
.winbtn { margin-left: auto; display: flex; gap: 34px; padding-right: 18px; }
.wb { width: 12px; height: 12px; }

/* menu */
.menubar { height: 29px; flex: none; background: #f5f5f5; display: flex; align-items: center; gap: 11.2px; white-space: nowrap; position: relative; }
.menu-caret { margin: 1px -4px 0 -5px; }
.ticker { width: 271px; flex: none; display: flex; align-self: stretch; align-items: center; background: #fafafa; padding-left: 22px; }
.ticker-text { width: 166px; color: #0a6a6a; font-size: 12px; overflow: hidden; }
.phone { color: #333; }
.beans { margin-left: 9px; }
.bell { width: 14px; height: 16px; flex: none; }
.chev { font-size: 12px; font-weight: 700; color: #222; flex: none; width: 10px; }
.chev.end { position: absolute; right: 2px; top: 3px; }

/* toolbars */
.toolbar { display: flex; align-items: center; gap: 7px; white-space: nowrap; flex: none; background: #f7f7f7; position: relative; padding-top: 2px; }
.toolbar.main { height: 30px; }
.row2, .row3, .row4 { height: 29px; }
.row2 { padding-left: 16px; }
.row3 { padding-left: 14px; width: 1068px; }
.row4 { padding-left: 9px; height: 30px; }
.tool { display: inline-flex; align-items: center; gap: 4px; flex: none; color: #222; }
.tool.off { color: #aaa; }
.tool.active { border: 1px solid #3a9ae0; background: #eaf4fc; height: 24px; padding: 0 3px 0 2px; margin: 0 -3px 0 2px; gap: 3px; }
.tool.narrow { gap: 2px; margin-left: 1px; }
.tool.pointer { gap: 6px; margin-left: 1px; }
.ic { width: 16px; height: 16px; flex: none; }
.cur { width: 10px; height: 14px; flex: none; }
.caret { width: 7px; height: 4px; flex: none; border: 3px solid transparent; border-top: 4px solid #333; border-bottom: 0; margin-top: 1px; }
.caret.tight { margin-left: -3px; }
.caret.snug { margin-right: -2px; }
.caret.snug4 { margin-right: -4px; }
.sep { width: 1px; height: 20px; background: #bdbdbd; flex: none; margin: 0 -1px; }
.gripbar { width: 2px; height: 18px; flex: none; border-left: 2px dotted #aaa; }
.newdoc { margin-left: -4px; width: 15px; }
.open { margin-left: 2px; }
.savebox { width: 23px; height: 22px; border: 1px solid #5a9ad8; background: #cfe4f8; display: flex; align-items: center; justify-content: center; flex: none; margin: 0 -4px 0 -4px; }
.undo { margin-left: 2px; }
.c-main { margin: -14px 5px 0 4px; }
.sigma { margin-left: 2px; }
.sigma b { width: 11px; font-size: 14px; font-weight: 700; margin-right: 3px; }
.c-view { margin: -14px -1px 0 10px; }

.combo { height: 22px; background: #fff; display: inline-flex; align-items: center; flex: none; overflow: hidden; white-space: nowrap; }
.c39 { width: 39px; }
.c41 { width: 41px; padding-left: 2px; }
.c51 { width: 51px; }
.c52 { width: 52px; }
.c45 { width: 44px; margin-left: -4px; }
.coord { color: #999; flex: none; }
.cx { margin: 0 -2px 0 -4px; }
.cmm { margin-left: -5px; }
.cy { margin: 0 -4px 0 -2px; }
.cmm2 { margin-left: -6px; }
.spin { width: 58px; height: 22px; border: 1px solid #8a8a8a; background: #f7f7f7; color: #999; display: flex; align-items: center; justify-content: flex-end; padding-right: 19px; flex: none; position: relative; }
.spin::after { content: ""; position: absolute; right: 5px; top: 4px; width: 0; height: 0; border-style: solid; border-width: 0 3px 4px; border-color: transparent transparent #555; }
.spin::before { content: ""; position: absolute; right: 5px; bottom: 4px; width: 0; height: 0; border-style: solid; border-width: 4px 3px 0; border-color: #555 transparent transparent; }
.check { width: 11px; height: 11px; border: 1px solid #888; background: #fff; flex: none; margin-left: -2px; }
.rotlabel { margin-left: 1px; }
.c-row2 { margin: -14px -3px 0 35px; }
.g-row3 { margin: 0 -3px 0 3px; }
.c-row4 { margin: -14px 0 0 40px; }

/* navigation */
.workspace { flex: 1; display: flex; min-height: 0; }
.nav { width: 176px; flex: none; display: flex; flex-direction: column; border-right: 1px solid #aaa; padding-top: 2px; height: 604px; background: #f0f0f0; }
.nav-head { height: 15px; flex: none; background: #0a5ad8; color: #fff; display: flex; align-items: center; overflow: hidden; margin-bottom: 1px; }
.nav-title { margin-left: -4px; font-size: 12px; }
.nav-pin { width: 10px; height: 12px; margin-left: auto; }
.nav-x { width: 9px; height: 9px; margin: 0 3px 0 9px; }
.nav-btn { height: 22px; flex: none; display: flex; align-items: center; justify-content: center; background: #f0f0f0; border-bottom: 1px solid #aaa; color: #333; padding-top: 5px; }
.nav-btn.bottom { border-top: 1px solid #aaa; height: 25px; padding-top: 1px; }
.nav-tools { height: 25px; flex: none; background: #fff; display: flex; align-items: center; gap: 8px; padding-top: 2px; }
.expand { width: 15px; height: 14px; }
.tree-wrap { flex: 1; min-height: 0; background: #fff; display: flex; overflow: hidden; }
.tree { flex: 1; padding-top: 6px; min-width: 0; overflow: hidden; font-size: 12px; color: #222; background-image: repeating-linear-gradient(#999 0 1px, transparent 1px 3px); background-size: 1px 380px; background-position: 8px 16px; background-repeat: no-repeat; }
.tree li { height: 16px; display: flex; align-items: center; position: relative; white-space: nowrap; }
.tree em { font: 10px "Liberation Mono", monospace; color: #222; }
.folder { padding-left: 19px; }
.fi { width: 16px; height: 14px; margin-right: 4px; flex: none; }
.folder::before { content: ""; position: absolute; left: 5px; top: 4px; width: 5px; height: 5px; border: solid #999; border-width: 1px 1px 0 0; transform: rotate(45deg); background: #fff; }
.folder.open::before { left: 5px; top: 3px; border-color: #555; transform: rotate(135deg); }
.leaf { padding-left: 39px; }
.leaf::before { content: ""; position: absolute; left: 27px; top: 0; height: 16px; width: 11px; border-left: 1px dotted #888; }
.leaf.last::before { height: 8px; }
.leaf::after { content: ""; position: absolute; left: 27px; top: 8px; width: 11px; border-top: 1px dotted #888; }
.li { width: 15px; height: 15px; margin-right: 4px; flex: none; }
.sel { background: linear-gradient(90deg, transparent 36px, #ddd 36px, #ddd 92px, transparent 92px); }
.scrollbar { width: 18px; flex: none; background: #fff; padding: 0 2px 0 1px; display: flex; flex-direction: column; align-items: stretch; }
.scrollbar .arrow { width: 10px; height: 6px; margin: 10px auto 5px; flex: none; }
.thumb { height: 281px; background: #cdcdcd; flex: none; }
.scrollbar .arrow.down { margin: auto auto 6px; }

/* right pane */
.content { flex: 1; min-width: 0; display: flex; flex-direction: column; }
.scene { width: 1177px; height: 507px; margin-left: 5px; flex: none; display: block; }
.axis-tag { font: 700 12px "Liberation Sans", sans-serif; fill: #ccc; }
.axis { font: 13px "Liberation Sans", sans-serif; }
.axis.z { fill: #2a6ae0; }
.axis.y { fill: #1ab01a; }
.axis.x { fill: #c01a1a; }
.statusstrip { height: 9px; flex: none; margin-left: 5px; }
.strip-white { display: flex; height: 100%; width: 262px; margin-left: 212px; background: #fafafa; padding: 3px 0 0 58px; }
.strip-tab { width: 51px; height: 6px; background: #d8eafa; border: 1px solid #4a8ac8; border-bottom: 0; }

/* overlays */
.badge { position: absolute; left: 296px; top: -26px; width: 44px; height: 44px; border-radius: 50%; background: #f08a3c; box-shadow: 0 1px 3px #8a8a8a; color: #fff; font-weight: 700; font-size: 11px; display: flex; align-items: flex-end; justify-content: center; padding-bottom: 6px; }
.progress { position: absolute; left: 664px; top: 0; width: 60px; height: 18px; background: #fff; border: 1px solid #ccc; border-radius: 0 0 8px 8px; padding: 2px 2px 0; }
.progress-bar { display: block; height: 11px; background: repeating-linear-gradient(90deg, #1a78d0 0 2px, #4a9ae0 2px 3px); }
.sogou { position: absolute; left: 1046px; top: 12px; display: flex; align-items: flex-start; }
.sogou-s { width: 25px; height: 24px; margin-top: 1px; background: #ee5a1e; color: #fff; font: 700 25px/24px "Liberation Sans", sans-serif; text-align: center; transform: rotate(-12deg); border-radius: 3px; flex: none; position: relative; z-index: 1; }
.sogou-bar { width: 160px; height: 23px; margin: 3px 0 0 -1px; background: #fff; border: 1px solid #b8b8b8; display: flex; align-items: center; justify-content: space-between; padding: 0 4px 0 10px; color: #1a6fc0; }
.sogou-bar b { font-size: 14px; }
.sg { width: 15px; height: 15px; flex: none; }
.sg-punct { font-weight: 700; font-size: 14px; }
.popcard { position: absolute; left: 1342px; top: 111px; width: 16px; height: 49px; background: #fff; box-shadow: -1px 0 3px #ccc; padding: 6px 0 0 3px; color: #aaa; overflow: hidden; }
.pop-text { display: block; font-size: 13px; }
.pop-btn { position: absolute; left: 0; top: 27px; width: 20px; height: 20px; border: 1px solid #666; background: #f0f0f0; color: #444; font-size: 11px; line-height: 18px; text-align: center; }
```
